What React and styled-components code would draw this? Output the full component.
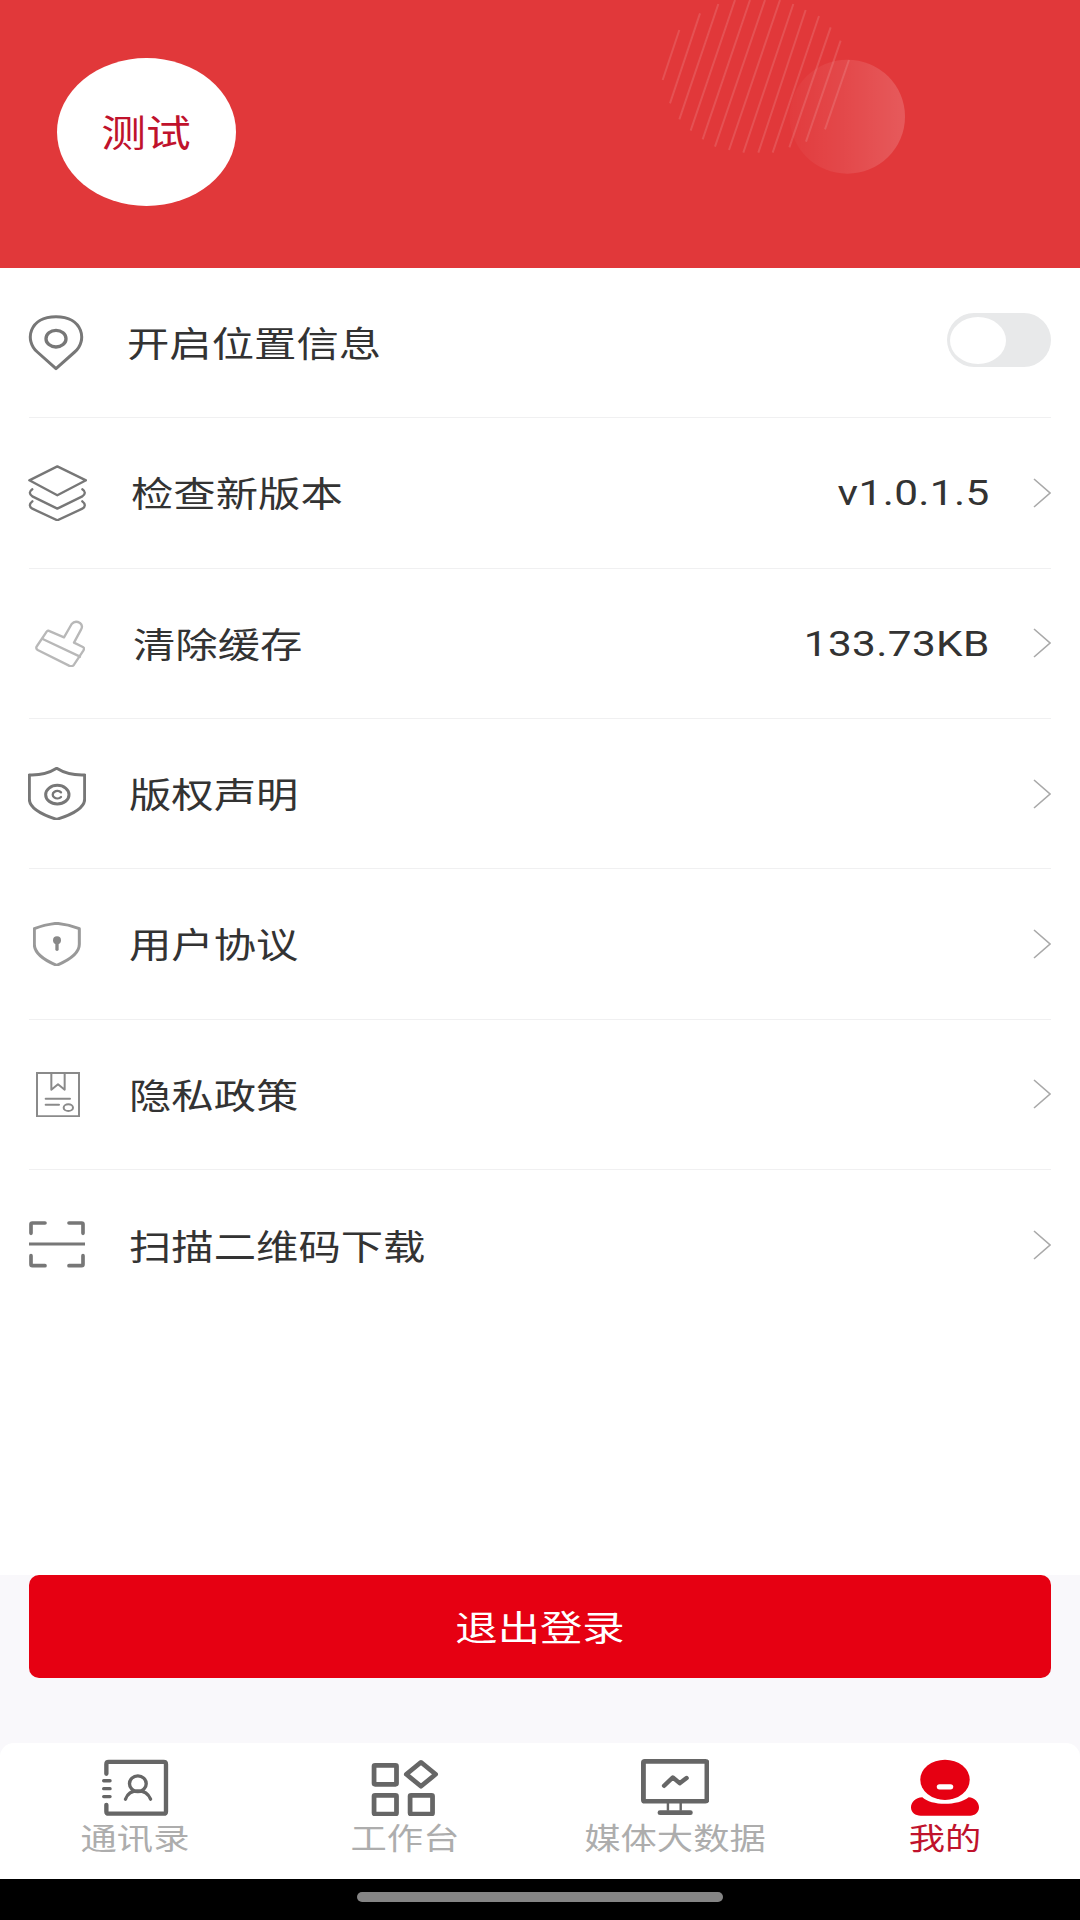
import React from "react";
import styled, { createGlobalStyle } from "styled-components";

const FONT = `"Liberation Sans", "Noto Sans CJK SC", sans-serif`;

const Global = createGlobalStyle`
  html, body { margin: 0; padding: 0; background: #fff; }
  #root { width: 1080px; height: 1920px; }
`;

const Page = styled.div`
  width: 1080px;
  height: 1920px;
  display: flex;
  flex-direction: column;
  overflow: hidden;
  font-family: ${FONT};
  background: #fff;
`;

const Header = styled.header`
  position: relative;
  flex: 0 0 268px;
  box-sizing: border-box;
  padding: 58px 0 0 57px;
  background: #e1383a;
`;

const Avatar = styled.div`
  width: 179px;
  height: 148px;
  border-radius: 50%;
  background: #fff;
  display: flex;
  align-items: center;
  justify-content: center;
`;

const Stretched = styled.span`
  display: inline-block;
  white-space: nowrap;
  transform: scaleX(1.21);
  transform-origin: ${(p) => p.$origin || "left"} center;
`;

const AvatarName = styled(Stretched)`
  font-size: 37px;
  color: #c0122c;
  transform-origin: center center;
  margin-top: -3px;
  margin-left: -2px;
`;

const Decoration = styled.svg`
  position: absolute;
  left: 640px;
  top: 0;
`;

const List = styled.main`
  flex: 1;
  box-sizing: border-box;
  padding: 0 29px;
  background: #fff;
`;

const Row = styled.div`
  height: 150.33px;
  box-sizing: border-box;
  display: flex;
  align-items: center;
  border-bottom: ${(p) => (p.$last ? "none" : "1px solid #f0f0f1")};
`;

const IconSlot = styled.div`
  flex: 0 0 ${(p) => p.$width}px;
  display: flex;
  align-items: center;
`;

const IconOffset = styled.svg`
  display: block;
  margin-left: ${(p) => p.$x}px;
`;

const Label = styled(Stretched)`
  font-size: 35px;
  color: #333;
  margin-top: -2px;
`;

const Trailing = styled.div`
  margin-left: auto;
  display: flex;
  align-items: center;
`;

const Value = styled(Stretched)`
  font-size: 35px;
  font-family: Roboto, ${FONT};
  letter-spacing: 0.3px;
  color: #333;
  margin-top: 2px;
  margin-right: 43px;
`;

const Chevron = styled.svg`
  display: block;
`;

const Toggle = styled.div`
  position: relative;
  width: 104px;
  height: 54px;
  border-radius: 27px;
  background: #e8e9ea;
  margin-top: -5px;
`;

const Knob = styled.div`
  position: absolute;
  left: 3px;
  top: 4px;
  width: 56px;
  height: 47px;
  border-radius: 50%;
  background: #fff;
`;

const Footer = styled.div`
  flex: 0 0 168px;
  box-sizing: border-box;
  padding: 0 29px;
  background: #f9f8fb;
`;

const LogoutButton = styled.button`
  display: flex;
  align-items: center;
  justify-content: center;
  width: 100%;
  height: 103px;
  border: 0;
  border-radius: 10px;
  background: #e60012;
  font-family: ${FONT};
`;

const LogoutText = styled(Stretched)`
  font-size: 35px;
  color: #fff;
  transform-origin: center center;
  margin-top: -2px;
`;

const TabBarBack = styled.div`
  flex: 0 0 136px;
  background: #f9f8fb;
`;

const TabBar = styled.nav`
  height: 100%;
  display: grid;
  grid-template-columns: repeat(4, 1fr);
  background: #fff;
  border-radius: 14px 14px 0 0;
`;

const Tab = styled.div`
  display: flex;
  flex-direction: column;
  align-items: center;
  padding-top: 16px;
`;

const TabIcon = styled.svg`
  display: block;
  height: 57px;
`;

const TabLabel = styled(Stretched)`
  font-size: 30px;
  line-height: 40px;
  margin-top: 3px;
  color: ${(p) => (p.$active ? "#c0122c" : "#adadad")};
  transform-origin: center center;
`;

const NavArea = styled.div`
  flex: 0 0 41px;
  box-sizing: border-box;
  background: #000;
  display: flex;
  justify-content: center;
  padding-top: 13px;
`;

const HomePill = styled.div`
  width: 366px;
  height: 10px;
  border-radius: 5px;
  background: #858585;
`;

const stripes = [
  [68, 240, 118, 90],
  [90, 310, 180, 40],
  [118, 358, 235, 12],
  [152, 392, 285, 0],
  [188, 418, 330, 0],
  [225, 440, 375, 0],
  [267, 450, 420, 0],
  [310, 458, 460, 12],
  [355, 458, 497, 30],
  [398, 458, 537, 48],
  [448, 442, 572, 82],
  [498, 425, 602, 122],
  [555, 388, 627, 180],
];

const HeaderArt = () => (
  <Decoration width="280" height="200" viewBox="0 0 840 600" fill="none">
    <defs>
      <linearGradient id="blob" x1="0" x2="1" y1="0" y2="0">
        <stop offset="0" stopColor="#fff" stopOpacity="0.02" />
        <stop offset="0.45" stopColor="#fff" stopOpacity="0.08" />
        <stop offset="1" stopColor="#fff" stopOpacity="0.17" />
      </linearGradient>
    </defs>
    <ellipse cx="622" cy="350" rx="173" ry="171" fill="url(#blob)" />
    {stripes.map(([a, b, c, d]) => (
      <line key={a} x1={a} y1={b} x2={c} y2={d} stroke="#fff" strokeOpacity="0.13" strokeWidth="6" />
    ))}
  </Decoration>
);

const Svg = ({ box, x, children }) => {
  const [, , w, h] = box;
  return (
    <IconOffset $x={x} width={w / 3} height={h / 3} viewBox={box.join(" ")} fill="none" strokeLinecap="round" strokeLinejoin="round">
      {children}
    </IconOffset>
  );
};

const PinIcon = () => (
  <Svg box={[84, 72, 168, 168]} x={-1}>
    <g stroke="#777">
      <path strokeWidth="9" d="M168 233 L112 183 C72 148 88 77 168 77 C248 77 264 148 224 183 Z" />
      <ellipse strokeWidth="10" cx="168" cy="143" rx="30" ry="25" />
    </g>
  </Svg>
);

const LayersIcon = () => (
  <Svg box={[84, 524, 178, 168]} x={-1}>
    <g stroke="#777" strokeWidth="7">
      <path d="M172 528 L258 570 L172 615 L88 570 Z" />
      <path d="M97 597 Q82 607 97 618 L172 655 L247 618 Q262 607 247 597" />
      <path d="M97 633 Q82 645 97 655 L172 690 L247 655 Q262 645 247 633" />
    </g>
  </Svg>
);

const BroomIcon = () => (
  <Svg box={[105, 538, 150, 142]} x={6}>
    <g stroke="#b8b8b8" strokeWidth="7">
      <path d="M145 570 L192 590 L215 550 Q225 538 240 547 Q250 555 243 567 L222 606 L250 620 Q254 623 250 630 L222 672 Q215 680 207 675 L113 628 Q106 623 111 616 L140 573 Q142 569 145 570 Z" />
      <path d="M128 595 L240 648" />
    </g>
  </Svg>
);

const CopyrightIcon = () => (
  <Svg box={[84, 979, 174, 160]} x={-1}>
    <g stroke="#777" strokeWidth="9">
      <path d="M170 983 Q205 1005 254 1003 V1075 Q254 1110 170 1136 Q88 1110 88 1075 V1003 Q135 1005 170 983 Z" />
      <ellipse cx="172" cy="1062" rx="35" ry="28" />
      <path d="M183 1055 A14 11 0 1 0 183 1069" strokeWidth="7" />
    </g>
  </Svg>
);

const KeyShieldIcon = () => (
  <Svg box={[99, 123, 144, 134]} x={4}>
    <path stroke="#999" strokeWidth="9" d="M170 127 Q205 130 238 143 V190 Q238 225 170 253 Q103 225 103 190 V143 Q135 130 170 127 Z" />
    <circle cx="171" cy="178" r="12" fill="#888" />
    <path stroke="#888" strokeWidth="10" d="M171 180 V205" />
  </Svg>
);

const BoxIcon = () => (
  <Svg box={[106, 575, 132, 136]} x={7}>
    <g stroke="#8a8a8a" strokeWidth="6">
      <path strokeLinejoin="miter" d="M109 578 H235 V708 H109 Z" />
      <path d="M152 578 V628 L172 612 L192 628 V578" />
      <path d="M135 655 H208 M135 673 H175" />
      <ellipse cx="203" cy="682" rx="14" ry="10" />
    </g>
  </Svg>
);

const ScanIcon = () => (
  <Svg box={[84, 1023, 174, 144]} x={-1}>
    <g stroke="#777" strokeWidth="11">
      <path d="M93 1060 V1033 Q93 1029 97 1029 H135" />
      <path d="M207 1029 H245 Q249 1029 249 1033 V1060" />
      <path d="M93 1127 V1153 Q93 1157 97 1157 H135" />
      <path d="M207 1157 H245 Q249 1157 249 1153 V1127" />
      <path strokeLinecap="butt" strokeWidth="9" d="M87 1092 H255" />
    </g>
  </Svg>
);

const Arrow = () => (
  <Chevron width="18" height="30" viewBox="0 0 18 30" fill="none">
    <path d="M1 1 L17 15 L1 29" stroke="#a9a9a9" strokeWidth="1.6" />
  </Chevron>
);

const ContactsTab = () => (
  <TabIcon width="68" viewBox="290 115 203 173" preserveAspectRatio="none" fill="none" strokeLinecap="round" strokeLinejoin="round">
    <g stroke="#666">
      <path strokeWidth="13" d="M306 160 V131 Q306 124 313 124 H477 Q484 124 484 131 V274 Q484 281 477 281 H313 Q306 281 306 274 V254" />
      <path strokeWidth="10" d="M298 181 H317 M298 205 H317 M298 229 H317" />
      <ellipse strokeWidth="10" cx="400" cy="190" rx="25" ry="24" />
      <path strokeWidth="10" d="M363 237 Q372 212 400 212 Q428 212 438 237" />
    </g>
  </TabIcon>
);

const WorkbenchTab = () => (
  <TabIcon width="68" viewBox="1072 120 200 171" preserveAspectRatio="none" fill="none" strokeLinejoin="round">
    <g stroke="#666" strokeWidth="14">
      <rect x="1081" y="139" width="66" height="57" rx="3" />
      <path d="M1219 130 L1262 166 L1219 202 L1176 166 Z" />
      <rect x="1081" y="229" width="66" height="56" rx="3" />
      <rect x="1187" y="229" width="66" height="56" rx="3" />
    </g>
  </TabIcon>
);

const MonitorTab = () => (
  <TabIcon width="68" viewBox="293 118 197 170" preserveAspectRatio="none" fill="none" strokeLinecap="round" strokeLinejoin="round">
    <g stroke="#666">
      <rect x="300" y="125" width="184" height="119" rx="4" strokeWidth="14" />
      <path strokeWidth="13" d="M360 198 L385 173 L405 190 L425 175" />
      <path strokeWidth="7" strokeLinecap="butt" d="M371 246 V272 M408 246 V272" />
      <path strokeWidth="14" d="M348 278 H436" />
    </g>
  </TabIcon>
);

const MeTab = () => (
  <TabIcon width="68" viewBox="1077 118 198 170" preserveAspectRatio="none">
    <ellipse cx="1176" cy="180" rx="72" ry="60" fill="#e60012" />
    <path fill="#e60012" d="M1110 232 C1135 258 1215 258 1245 232 C1262 232 1275 248 1275 262 C1275 278 1262 287 1250 287 H1105 C1090 287 1077 278 1077 262 C1077 248 1090 232 1110 232 Z" />
    <rect x="1152" y="193" width="48" height="16" rx="8" fill="#fff" />
  </TabIcon>
);

const rows = [
  { Icon: LayersIcon, slot: 102, label: "检查新版本", value: "v1.0.1.5" },
  { Icon: BroomIcon, slot: 104, label: "清除缓存", value: "133.73KB" },
  { Icon: CopyrightIcon, slot: 100, label: "版权声明" },
  { Icon: KeyShieldIcon, slot: 100, label: "用户协议" },
  { Icon: BoxIcon, slot: 100, label: "隐私政策" },
  { Icon: ScanIcon, slot: 100, label: "扫描二维码下载", last: true },
];

const tabs = [
  { Icon: ContactsTab, label: "通讯录" },
  { Icon: WorkbenchTab, label: "工作台" },
  { Icon: MonitorTab, label: "媒体大数据" },
  { Icon: MeTab, label: "我的", active: true },
];

export default function App() {
  return (
    <Page>
      <Global />
      <Header>
        <Avatar>
          <AvatarName>测试</AvatarName>
        </Avatar>
        <HeaderArt />
      </Header>
      <List>
        <Row>
          <IconSlot $width={98}>
            <PinIcon />
          </IconSlot>
          <Label>开启位置信息</Label>
          <Trailing>
            <Toggle>
              <Knob />
            </Toggle>
          </Trailing>
        </Row>
        {rows.map(({ Icon, slot, label, value, last }) => (
          <Row key={label} $last={last}>
            <IconSlot $width={slot}>
              <Icon />
            </IconSlot>
            <Label>{label}</Label>
            <Trailing>
              {value && <Value $origin="right">{value}</Value>}
              <Arrow />
            </Trailing>
          </Row>
        ))}
      </List>
      <Footer>
        <LogoutButton>
          <LogoutText>退出登录</LogoutText>
        </LogoutButton>
      </Footer>
      <TabBarBack>
        <TabBar>
          {tabs.map(({ Icon, label, active }) => (
            <Tab key={label}>
              <Icon />
              <TabLabel $active={active}>{label}</TabLabel>
            </Tab>
          ))}
        </TabBar>
      </TabBarBack>
      <NavArea>
        <HomePill />
      </NavArea>
    </Page>
  );
}
